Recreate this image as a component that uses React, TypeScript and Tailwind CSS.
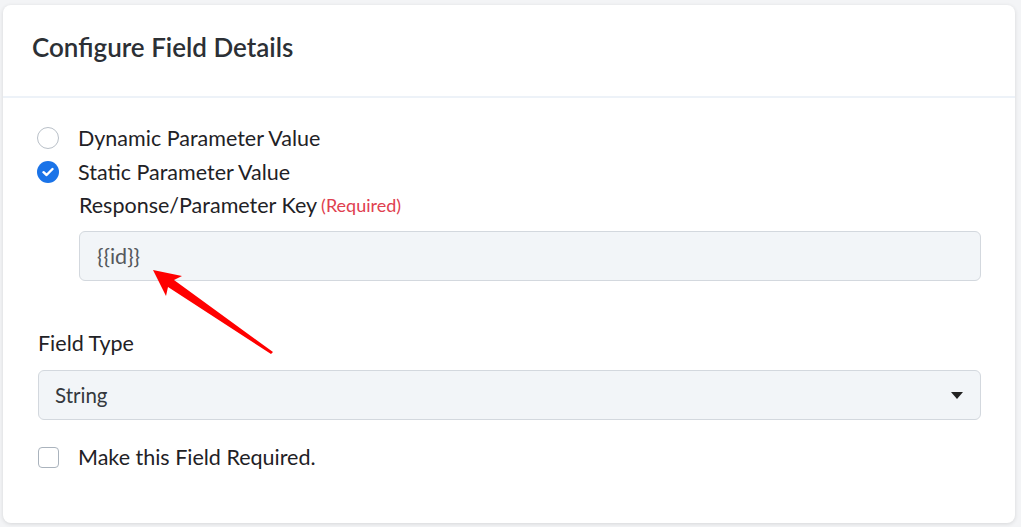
import React from "react";

const font = { fontFamily: "Lato, 'Open Sans', Arial, sans-serif" };

const RadioOption = ({ label, checked }: { label: string; checked?: boolean }) => (
  <label className="flex items-center h-[34px] gap-[19px]">
    {checked ? (
      <span className="w-[22px] h-[22px] rounded-full bg-[#1a73e8] flex items-center justify-center">
        <svg width="12" height="10" viewBox="0 0 12 10">
          <path d="M1.5 5.2 L4.6 8 L10.5 2" fill="none" stroke="#fff" strokeWidth="2.4" strokeLinecap="round" strokeLinejoin="round" />
        </svg>
      </span>
    ) : (
      <span className="w-[22px] h-[22px] rounded-full border border-[#b9c0c8] bg-white" />
    )}
    <span className="text-[21.5px] text-[#1f2226]">{label}</span>
  </label>
);

const App = () => {
  return (
    <div className="min-h-screen w-full bg-[#f3f4f6] pt-[5px] pl-[3px] pr-[6px] pb-[4px]" style={font}>
      <div className="relative bg-white rounded-[8px] shadow-[0_1px_4px_rgba(0,0,0,0.12)] h-[518px] flex flex-col">
        <div className="h-[93px] flex items-center pl-[29px] pb-[6px] border-b-2 border-[#edf2f8]">
          <h2 className="text-[26px] font-semibold text-[#2c3035]">Configure Field Details</h2>
        </div>

        <div className="flex flex-col pl-[34px] pr-[34px] pt-[23px]">
          <RadioOption label="Dynamic Parameter Value" />
          <RadioOption label="Static Parameter Value" checked />
          <div className="pl-[42px] flex flex-col">
            <div className="h-[32px] flex items-center">
              <span className="text-[21.5px] text-[#1f2226]">Response/Parameter Key</span>
              <span className="text-[18px] text-[#e0404f] ml-[4px]">(Required)</span>
            </div>
            <div className="mt-[10px] h-[50px] rounded-[6px] border border-[#d3d8de] bg-[#f2f5f8] flex items-center pl-[17px] text-[21.5px] text-[#55585c]">
              {"{{id}}"}
            </div>
          </div>

          <div className="mt-[49px] h-[26px] pl-[1px] flex items-center text-[21.5px] text-[#1f2226]">Field Type</div>
          <div className="mt-[14px] ml-[1px] h-[50px] rounded-[6px] border border-[#d3d8de] bg-[#f2f5f8] flex items-center justify-between pl-[16px] pr-[17px]">
            <span className="text-[20.5px] text-[#34383d]">String</span>
            <svg width="12" height="7" viewBox="0 0 12 7">
              <path d="M0 0 H12 L6 7 Z" fill="#222" />
            </svg>
          </div>

          <label className="mt-[24px] h-[26px] pl-[1px] flex items-center gap-[19px]">
            <span className="w-[21px] h-[21px] rounded-[4px] border border-[#aab3bd] bg-white" />
            <span className="text-[21.5px] text-[#1f2226]">Make this Field Required.</span>
          </label>
        </div>
      </div>

      <svg className="absolute left-0 top-0 pointer-events-none" width="1021" height="527">
        <polygon
          points="153,270 182,276 174,280 273,352 271,354 168,287 166,296"
          fill="#ff0000"
        />
      </svg>
    </div>
  );
};

export default App;
